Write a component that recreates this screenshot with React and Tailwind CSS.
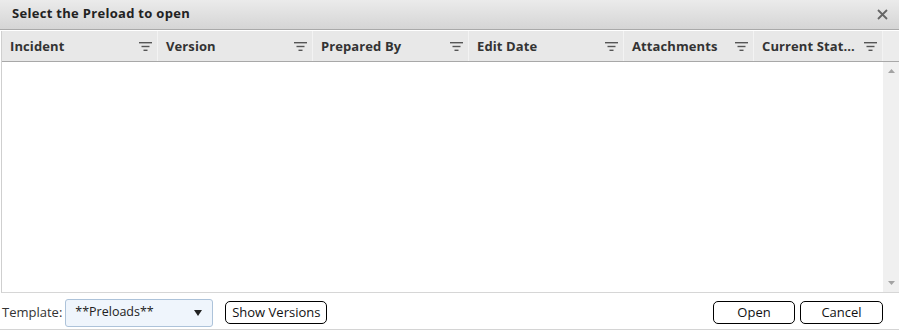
import React from "react";

const FilterIcon = () => (
  <svg width="13" height="9" viewBox="0 0 13 9" className="shrink-0">
    <rect x="0" y="0" width="13" height="1.4" fill="#555" />
    <rect x="2.5" y="3.8" width="8" height="1.4" fill="#555" />
    <rect x="4.5" y="7.6" width="4" height="1.4" fill="#555" />
  </svg>
);

const cols = [
  { label: "Incident", w: "w-[156px]" },
  { label: "Version", w: "w-[155px]" },
  { label: "Prepared By", w: "w-[156px]" },
  { label: "Edit Date", w: "w-[155px]" },
  { label: "Attachments", w: "w-[130px]" },
  { label: "Current Stat...", w: "w-[129px]" },
];

export default function App() {
  return (
    <div
      className="w-[899px] h-[331px] bg-white flex flex-col overflow-hidden text-[13px]"
      style={{ fontFamily: '"Open Sans", "DejaVu Sans", sans-serif' }}
    >
      {/* Title bar */}
      <div className="h-[30px] shrink-0 flex items-center justify-between pl-[12px] pr-[11px] bg-gradient-to-b from-[#ebebeb] to-[#d5d5d5] border-b border-[#a9a9a9]">
        <span className="font-bold text-[#222] text-[13px] tracking-[0.3px] -mt-[1px]">
          Select the Preload to open
        </span>
        <svg width="11" height="11" viewBox="0 0 11 11">
          <path d="M1 1 L10 10 M10 1 L1 10" stroke="#666" strokeWidth="1.8" />
        </svg>
      </div>

      {/* Grid */}
      <div className="mt-[1px] ml-[1px] flex-1 flex flex-col border-l border-[#cfcfcf] border-b border-b-[#d6d6d6] min-h-0">
        {/* Header */}
        <div className="h-[31px] shrink-0 flex bg-[#e8e8e8] border-b border-[#a8a8a8]">
          {cols.map((c) => (
            <div
              key={c.label}
              className={`${c.w} shrink-0 flex items-center justify-between pl-[8px] pr-[5px] pt-[1px] border-r border-[#f3f3f3]`}
            >
              <span className="font-bold text-[#333] whitespace-nowrap tracking-[0.1px]">
                {c.label}
              </span>
              <FilterIcon />
            </div>
          ))}
          <div className="flex-1 bg-[#ececec]" />
        </div>
        {/* Body */}
        <div className="flex-1 flex min-h-0">
          <div className="flex-1 bg-white" />
          <div className="w-[16px] bg-[#f0f0f0] flex flex-col items-center justify-between py-[7px]">
            <svg width="7" height="4" viewBox="0 0 7 4">
              <path d="M0 4 L3.5 0 L7 4 Z" fill="#a3a3a3" />
            </svg>
            <svg width="7" height="4" viewBox="0 0 7 4">
              <path d="M0 0 L3.5 4 L7 0 Z" fill="#a3a3a3" />
            </svg>
          </div>
        </div>
      </div>

      {/* Footer */}
      <div className="h-[37px] shrink-0 flex items-center pt-[3px] pl-[2px] pr-[16px] border-b border-[#d4d4d4] mb-[1px]">
        <span className="text-[#333] text-[13px]">Template:</span>
        <div className="ml-[3px] w-[148px] h-[28px] flex items-center justify-between pl-[9px] pr-[10px] rounded-[3px] border border-[#adc3da] bg-[#eff5fc]">
          <span className="text-[#222] text-[12.5px]">**Preloads**</span>
          <svg width="8" height="6" viewBox="0 0 8 6">
            <path d="M0 0 L8 0 L4 6 Z" fill="#222" />
          </svg>
        </div>
        <button className="ml-[12px] w-[102px] h-[23px] flex items-center justify-center border border-black rounded-[5px] bg-white text-[#111] text-[13px]">
          Show Versions
        </button>
        <div className="flex-1" />
        <button className="w-[82px] h-[23px] flex items-center justify-center border border-black rounded-[5px] bg-white text-[#111] text-[13px]">
          Open
        </button>
        <button className="ml-[5px] w-[83px] h-[23px] flex items-center justify-center border border-black rounded-[5px] bg-white text-[#111] text-[13px]">
          Cancel
        </button>
      </div>
    </div>
  );
}
